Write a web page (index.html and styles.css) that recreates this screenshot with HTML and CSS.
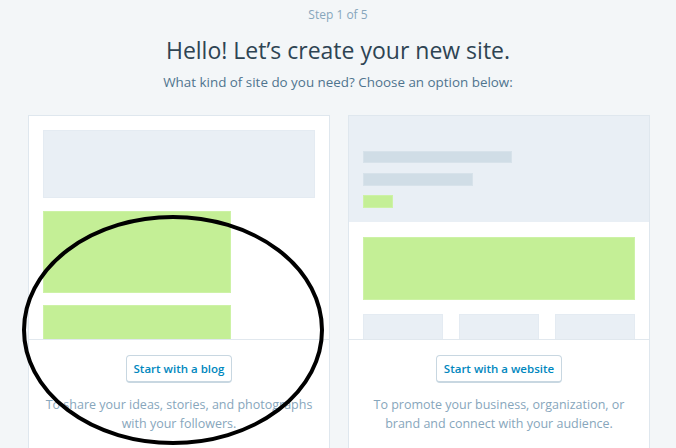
FILE: index.html
```html
<!DOCTYPE html>
<html lang="en">
<head>
<meta charset="utf-8">
<title>Create your new site</title>
<link rel="stylesheet" href="styles.css">
</head>
<body>
<div class="page">
  <header class="intro">
    <p class="step">Step 1 of 5</p>
    <h1 class="title">Hello! Let’s create your new site.</h1>
    <p class="subtitle">What kind of site do you need? Choose an option below:</p>
  </header>
  <div class="cards">
    <section class="card">
      <div class="preview blog-preview">
        <div class="ph-block"></div>
        <div class="ph-green ph-green-a"></div>
        <div class="ph-green ph-green-b"></div>
      </div>
      <div class="card-footer">
        <button class="choose-btn" type="button">Start with a blog</button>
        <p class="card-desc">To share your ideas, stories, and photographs with your followers.</p>
      </div>
    </section>
    <section class="card">
      <div class="preview site-preview">
        <div class="site-hero">
          <div class="ph-bar ph-bar-a"></div>
          <div class="ph-bar ph-bar-b"></div>
          <div class="ph-green ph-green-small"></div>
        </div>
        <div class="site-body">
          <div class="ph-green ph-green-wide"></div>
          <div class="ph-cols">
            <div class="ph-col"></div>
            <div class="ph-col"></div>
            <div class="ph-col"></div>
          </div>
        </div>
      </div>
      <div class="card-footer">
        <button class="choose-btn" type="button">Start with a website</button>
        <p class="card-desc">To promote your business, organization, or brand and connect with your audience.</p>
      </div>
    </section>
  </div>
  <svg class="annotation" width="676" height="448" viewBox="0 0 676 448" aria-hidden="true">
    <ellipse cx="173" cy="330" rx="149" ry="113" fill="none" stroke="#000" stroke-width="4"/>
  </svg>
</div>
</body>
</html>
```
FILE: styles.css
```css
* { box-sizing: border-box; }
html, body { margin: 0; padding: 0; }
body {
  background: #f3f6f8;
  font-family: "Open Sans", "Noto Sans", sans-serif;
  color: #2e4453;
  overflow: hidden;
}
.page {
  position: relative;
  width: 676px;
  height: 448px;
  overflow: hidden;
}
.intro {
  text-align: center;
  padding-top: 6px;
}
.step {
  margin: 0;
  font-size: 12px;
  line-height: 18px;
  color: #87a6bc;
}
.title {
  margin: 11px 0 0;
  font-size: 23px;
  font-weight: 400;
  line-height: 30px;
  color: #2e4453;
}
.subtitle {
  margin: 8px 0 0;
  font-size: 13.4px;
  line-height: 18px;
  color: #4f748e;
}
.cards {
  display: flex;
  gap: 18px;
  margin: 24px 0 0 28px;
}
.card {
  width: 302px;
  height: 360px;
  background: #fff;
  border: 1px solid #dfe7ee;
  display: flex;
  flex-direction: column;
}
.preview {
  height: 224px;
  overflow: hidden;
  border-bottom: 1px solid #e1e8ee;
  flex: none;
}
.blog-preview {
  padding: 14px;
}
.ph-block {
  height: 68px;
  background: #e9eff5;
  border: 1px solid #e4ebf2;
}
.ph-green {
  background: #c4ef96;
  border: 1px solid #cdf2a6;
}
.ph-green-a {
  width: 188px;
  height: 82px;
  margin-top: 13px;
}
.ph-green-b {
  width: 188px;
  height: 82px;
  margin-top: 12px;
}
.site-hero {
  height: 106px;
  background: #e9eff5;
  padding: 35px 14px 0;
}
.ph-bar {
  background: #d0dde6;
  border: 1px solid #d7e2ea;
}
.ph-bar-a { width: 149px; height: 12px; margin-bottom: 10px; }
.ph-bar-b { width: 110px; height: 13px; margin-bottom: 9px; }
.ph-green-small { width: 30px; height: 13px; }
.site-body {
  padding: 15px 14px 0;
}
.ph-green-wide {
  height: 63px;
}
.ph-cols {
  display: grid;
  grid-template-columns: repeat(3, 1fr);
  gap: 16px;
  margin-top: 14px;
}
.ph-col {
  height: 40px;
  background: #e9eff5;
  border: 1px solid #e4ebf2;
}
.card-footer {
  padding: 15px 10px 0;
  text-align: center;
}
.choose-btn {
  height: 28px;
  padding: 0 7px;
  background: #fff;
  border: 1px solid #c8d7e1;
  border-bottom-width: 2px;
  border-radius: 4px;
  font-family: "Open Sans", "Noto Sans", sans-serif;
  font-size: 11.5px;
  font-weight: 600;
  color: #0087be;
  cursor: pointer;
}
.card-desc {
  margin: 12px 0 0;
  font-size: 12.5px;
  line-height: 19px;
  color: #87a6bc;
}
.annotation {
  position: absolute;
  left: 0;
  top: 0;
  pointer-events: none;
}
```
